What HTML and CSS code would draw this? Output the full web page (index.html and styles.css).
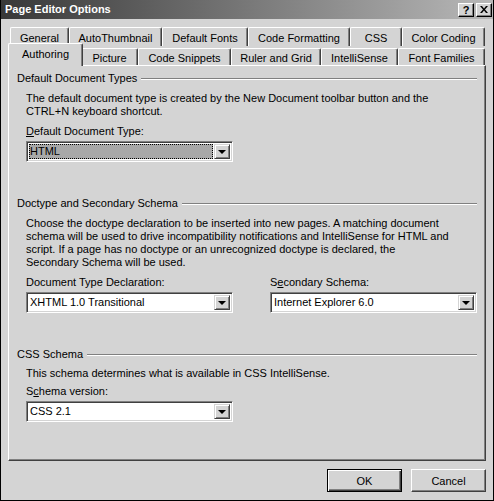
FILE: index.html
```html
<!DOCTYPE html>
<html lang="en">
<head>
    <meta charset="UTF-8">
    <title>Page Editor Options</title>
    <link rel="stylesheet" href="styles.css">
</head>
<body>
    <div class="window">
        <div class="titlebar">
            <span class="title">Page Editor Options</span>
            <span class="title-btn help">?</span>
            <span class="title-btn close">
                <svg width="8" height="7" viewBox="0 0 8 7"><path d="M0 0h2l2 2.5L6 0h2L5 3.5 8 7H6L4 4.5 2 7H0l3-3.5z" fill="#000"/></svg>
            </span>
        </div>

        <div class="tabs">
            <div class="tab-row back">
                <div class="tab">General</div>
                <div class="tab">AutoThumbnail</div>
                <div class="tab">Default Fonts</div>
                <div class="tab">Code Formatting</div>
                <div class="tab">CSS</div>
                <div class="tab">Color Coding</div>
            </div>
            <div class="tab-row front">
                <div class="tab selected">Authoring</div>
                <div class="tab">Picture</div>
                <div class="tab">Code Snippets</div>
                <div class="tab">Ruler and Grid</div>
                <div class="tab">IntelliSense</div>
                <div class="tab">Font Families</div>
            </div>
        </div>

        <div class="panel">
            <div class="group">
                <div class="group-title">Default Document Types</div>
                <div class="group-body">
                    <p>The default document type is created by the New Document toolbar button and the CTRL+N keyboard shortcut.</p>
                    <div class="field">
                        <label><u>D</u>efault Document Type:</label>
                        <div class="combo focused">
                            <span class="value">HTML</span>
                            <span class="arrow"></span>
                        </div>
                    </div>
                </div>
            </div>

            <div class="group">
                <div class="group-title">Doctype and Secondary Schema</div>
                <div class="group-body">
                    <p>Choose the doctype declaration to be inserted into new pages. A matching document schema will be used to drive incompatibility notifications and IntelliSense for HTML and script. If a page has no doctype or an unrecognized doctype is declared, the<br>Secondary Schema will be used.</p>
                    <div class="field-row">
                        <div class="field">
                            <label>Document Type Declaration:</label>
                            <div class="combo">
                                <span class="value">XHTML 1.0 Transitional</span>
                                <span class="arrow"></span>
                            </div>
                        </div>
                        <div class="field">
                            <label>S<u>e</u>condary Schema:</label>
                            <div class="combo">
                                <span class="value">Internet Explorer 6.0</span>
                                <span class="arrow"></span>
                            </div>
                        </div>
                    </div>
                </div>
            </div>

            <div class="group compact">
                <div class="group-title">CSS Schema</div>
                <div class="group-body">
                    <p>This schema determines what is available in CSS IntelliSense.</p>
                    <div class="field">
                        <label>S<u>c</u>hema version:</label>
                        <div class="combo">
                            <span class="value">CSS 2.1</span>
                            <span class="arrow"></span>
                        </div>
                    </div>
                </div>
            </div>
        </div>

        <div class="buttons">
            <button class="default">OK</button>
            <button>Cancel</button>
        </div>
    </div>
</body>
</html>
```

FILE: styles.css
```css
body {
    margin: 0;
    font-family: 'Liberation Sans', Arial, sans-serif;
    font-size: 11px;
    line-height: 13px;
    color: #000;
    background: #d4d4d4;
}
.window {
    width: 494px;
    height: 501px;
    box-sizing: border-box;
    border: 1px solid #000;
    border-top: none;
    background: #d4d4d4;
    display: flex;
    flex-direction: column;
}
.titlebar {
    height: 19px;
    display: flex;
    align-items: center;
    padding: 0 1px 0 4px;
    background: linear-gradient(to right, #383838, #b8b8b8);
    color: #fff;
    font-weight: bold;
    font-size: 11px;
}
.title {
    flex: 1;
}
.title-btn {
    width: 14px;
    height: 12px;
    background: #d4d4d4;
    color: #000;
    font-size: 11px;
    line-height: 12px;
    text-align: center;
    border-top: 1px solid #fff;
    border-left: 1px solid #fff;
    border-right: 1px solid #000;
    border-bottom: 1px solid #000;
    box-shadow: inset -1px -1px #808080;
    display: flex;
    align-items: center;
    justify-content: center;
}
.title-btn.help {
    margin-right: 2px;
}

/* tabs */
.tabs {
    margin-top: 8px;
    padding: 0 9px;
}
.tab-row {
    display: flex;
    height: 19px;
}
.tab {
    flex: none;
    box-sizing: border-box;
    text-align: center;
    border-top: 1px solid #fff;
    border-left: 1px solid #fff;
    border-right: 1px solid #404040;
    border-radius: 2px 2px 0 0;
    box-shadow: inset -1px 0 #808080;
    background: #d4d4d4;
    line-height: 16px;
    white-space: nowrap;
}
.back .tab {
    height: 19px;
    padding-top: 2px;
}
.back .tab:nth-child(1) { width: 59px; }
.back .tab:nth-child(2) { width: 93px; }
.back .tab:nth-child(3) { width: 86px; }
.back .tab:nth-child(4) { width: 102px; }
.back .tab:nth-child(5) { width: 52px; }
.back .tab:nth-child(6) { width: 83px; }

.front .tab {
    margin-top: 2px;
    height: 17px;
    padding-top: 1px;
}
.front .tab:nth-child(1) { width: 71px; }
.front .tab:nth-child(2) { width: 57px; }
.front .tab:nth-child(3) { width: 93px; }
.front .tab:nth-child(4) { width: 90px; }
.front .tab:nth-child(5) { width: 77px; }
.front .tab:nth-child(6) { width: 87px; }
.front .tab.selected {
    position: relative;
    z-index: 2;
    width: 75px;
    margin: -3px -2px 0 -2px;
    height: 23px;
    padding-top: 2px;
}

/* panel */
.panel {
    margin-left: 7px;
    width: 478px;
    height: 396px;
    box-sizing: border-box;
    border-top: 1px solid #fff;
    border-left: 1px solid #fff;
    border-right: 1px solid #404040;
    border-bottom: 1px solid #404040;
    box-shadow: inset -1px -1px #808080;
    padding: 6px 8px 0 8px;
}
.group {
    margin-bottom: 35px;
}
.group-title {
    display: flex;
    align-items: center;
}
.group-title::after {
    content: "";
    flex: 1;
    margin-left: 4px;
    border-top: 1px solid #808080;
    border-bottom: 1px solid #fff;
}
.group-body {
    padding-left: 9px;
}
.group-body p {
    max-width: 430px;
    margin: 7px 0 7px;
}
.compact .group-body p {
    margin: 6px 0 5px;
}
.field label {
    display: block;
    margin-bottom: 3px;
}
.field-row {
    display: flex;
    gap: 37px;
}
.combo {
    width: 207px;
    height: 21px;
    box-sizing: border-box;
    display: flex;
    background: #fff;
    border-top: 1px solid #808080;
    border-left: 1px solid #808080;
    border-right: 1px solid #fff;
    border-bottom: 1px solid #fff;
    box-shadow: inset 1px 1px #404040, inset -1px -1px #d4d4d4;
    padding: 2px;
}
.combo .value {
    flex: 1;
    padding-left: 1px;
    line-height: 15px;
}
.combo.focused .value {
    background: #a8a8a8;
    outline: 1px dotted #000;
    outline-offset: -1px;
    margin-right: 1px;
}
.arrow {
    width: 16px;
    box-sizing: border-box;
    background: #d4d4d4;
    border-top: 1px solid #d4d4d4;
    border-left: 1px solid #d4d4d4;
    border-right: 1px solid #404040;
    border-bottom: 1px solid #404040;
    box-shadow: inset 1px 1px #fff, inset -1px -1px #808080;
    display: flex;
    align-items: center;
    justify-content: center;
}
.arrow::before {
    content: "";
    border-left: 4px solid transparent;
    border-right: 4px solid transparent;
    border-top: 4px solid #000;
    margin-top: 1px;
}

/* dialog buttons */
.buttons {
    display: flex;
    justify-content: flex-end;
    gap: 9px;
    padding: 8px 7px 0 0;
}
button {
    width: 75px;
    height: 23px;
    font-family: inherit;
    font-size: 11px;
    color: #000;
    background: #d4d4d4;
    border-top: 1px solid #fff;
    border-left: 1px solid #fff;
    border-right: 1px solid #404040;
    border-bottom: 1px solid #404040;
    box-shadow: inset -1px -1px #808080;
    padding: 0;
}
button.default {
    border: 1px solid #000;
    box-shadow: inset 1px 1px #fff, inset -1px -1px #404040, inset -2px -2px #808080;
}
```
